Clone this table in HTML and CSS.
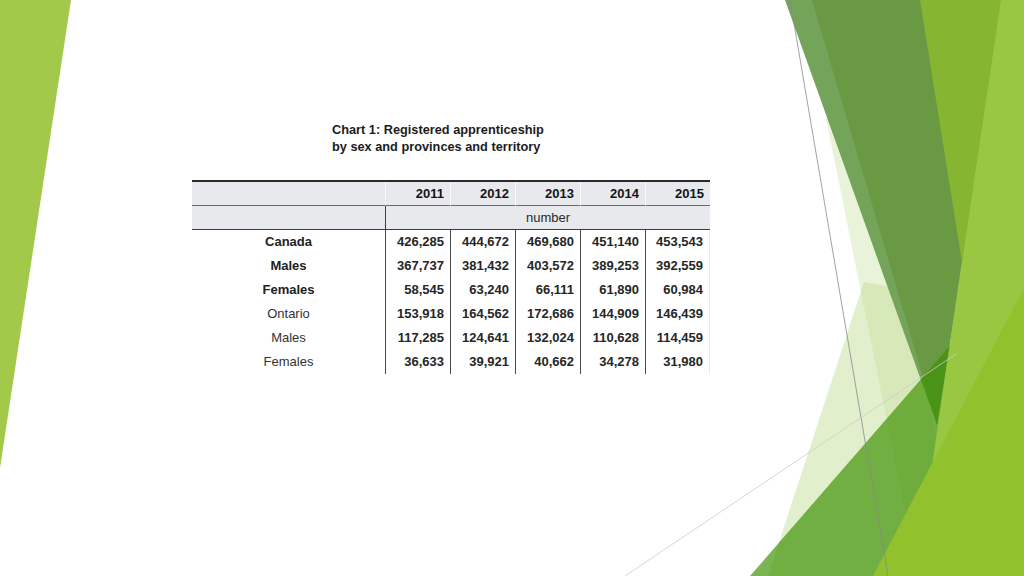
FILE: index.html
```html
<!DOCTYPE html>
<html lang="en">
<head>
<meta charset="utf-8">
<title>Chart 1: Registered apprenticeship</title>
<link rel="stylesheet" href="styles.css">
</head>
<body>
<div class="slide">
  <svg class="backdrop" viewBox="0 0 1024 576" width="1024" height="576" aria-hidden="true">
    <polygon class="s-left" points="0,0 71,0 0,468"/>
    <polygon class="s-pale1" points="826,118 880,118 960,576 918,576"/>
    <polygon class="s-pale2" points="864,282 768,576 960,576 960,300"/>
    <polygon class="s-dark1" points="785,0 1004,0 937,425"/>
    <polygon class="s-dark2" points="812,0 1004,0 937,425"/>
    <polygon class="s-green" points="750,576 955,340 1024,340 1024,576"/>
    <polygon class="s-right" points="1000,0 1024,0 1024,576 916,576"/>
    <polygon class="s-yellow" points="920,0 1001,0 962,262"/>
    <polygon class="s-lime" points="1024,288 1024,576 873,576"/>
    <line class="l-dark" x1="790" y1="0" x2="888" y2="576"/>
    <line class="l-light" x1="625" y1="576" x2="956" y2="354"/>
  </svg>

  <div class="content">
    <h1 class="title">Chart 1: Registered apprenticeship<br>by sex and provinces and territory</h1>
    <table class="data">
      <colgroup>
        <col class="c-label">
        <col class="c-num"><col class="c-num"><col class="c-num"><col class="c-num"><col class="c-num">
      </colgroup>
      <thead>
        <tr class="h-years">
          <th></th>
          <th>2011</th><th>2012</th><th>2013</th><th>2014</th><th>2015</th>
        </tr>
        <tr class="h-unit">
          <th></th>
          <th colspan="5">number</th>
        </tr>
      </thead>
      <tbody>
        <tr class="strong"><th>Canada</th><td>426,285</td><td>444,672</td><td>469,680</td><td>451,140</td><td>453,543</td></tr>
        <tr class="strong"><th>Males</th><td>367,737</td><td>381,432</td><td>403,572</td><td>389,253</td><td>392,559</td></tr>
        <tr class="strong"><th>Females</th><td>58,545</td><td>63,240</td><td>66,111</td><td>61,890</td><td>60,984</td></tr>
        <tr><th>Ontario</th><td>153,918</td><td>164,562</td><td>172,686</td><td>144,909</td><td>146,439</td></tr>
        <tr><th>Males</th><td>117,285</td><td>124,641</td><td>132,024</td><td>110,628</td><td>114,459</td></tr>
        <tr><th>Females</th><td>36,633</td><td>39,921</td><td>40,662</td><td>34,278</td><td>31,980</td></tr>
      </tbody>
    </table>
  </div>
</div>
</body>
</html>
```

FILE: styles.css
```css
* {
  box-sizing: border-box;
}

html,
body {
  margin: 0;
  padding: 0;
  background: #ffffff;
}

body {
  font-family: "Liberation Sans", Arial, sans-serif;
  color: #222222;
}

.slide {
  position: relative;
  width: 1024px;
  height: 576px;
  overflow: hidden;
  background: #ffffff;
}

/* decorative facet artwork */
.backdrop {
  position: absolute;
  left: 0;
  top: 0;
  display: block;
}

.s-left { fill: #a3c94b; }
.s-pale1 { fill: #c5e09a; opacity: 0.38; }
.s-pale2 { fill: #c5e09a; opacity: 0.5; }
.s-dark1 { fill: #74a35a; }
.s-dark2 { fill: #6a9944; }
.s-green { fill: rgb(60, 145, 0); opacity: 0.68; }
.s-right { fill: #99c742; }
.s-yellow { fill: #86b532; }
.s-lime { fill: #91c22e; }

.l-dark {
  stroke: #8a8a8a;
  stroke-width: 0.8;
}

.l-light {
  stroke: #cccccc;
  stroke-width: 0.8;
}

/* content */
.content {
  position: relative;
  padding: 121px 0 0 192px;
}

.title {
  margin: 0 0 25px 140px;
  font-size: 12.75px;
  line-height: 17px;
  font-weight: bold;
  color: #1c1c1c;
}

.data {
  table-layout: fixed;
  width: 518px;
  border-collapse: separate;
  border-spacing: 0;
  border-top: 2px solid #2a2a2a;
  font-size: 13px;
  color: #262626;
}

.c-label { width: 193px; }
.c-num { width: 65px; }

.data th,
.data td {
  padding: 0;
  white-space: nowrap;
}

/* header rows */
.h-years th,
.h-unit th {
  background: #e7e9ec;
  line-height: 23px;
}

.h-years th {
  border-bottom: 1px solid #6a6a6a;
  text-align: right;
  padding-right: 6px;
  font-weight: bold;
  color: #141414;
}

.h-years th + th {
  border-left: 1px solid #f8f9fa;
}

.h-unit th {
  border-bottom: 1px solid #3c3c3c;
  font-weight: normal;
  text-align: center;
  color: #2a2a2a;
}

.h-unit th + th {
  border-left: 1px solid #3c3c3c;
}

/* body rows */
.data tbody th,
.data tbody td {
  line-height: 24px;
}

.data tbody th {
  text-align: center;
  font-weight: normal;
  color: #333333;
}

.data tbody td {
  border-left: 1px solid #4a4a4a;
  text-align: right;
  padding-right: 6px;
  font-weight: bold;
}

.data tbody td:last-child {
  border-right: 1px solid #ececec;
}

.data tbody .strong th {
  font-weight: bold;
  color: #222222;
}
```
